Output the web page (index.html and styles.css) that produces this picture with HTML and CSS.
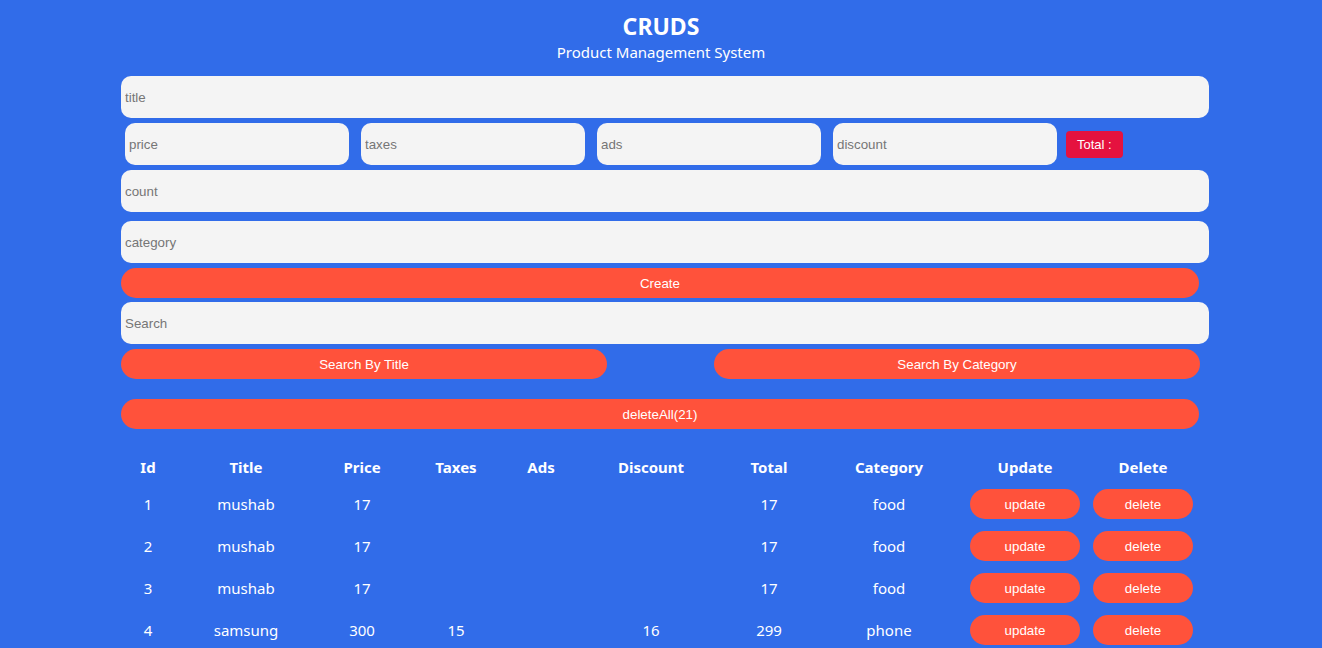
FILE: index.html
```html
<!DOCTYPE html>
<html lang="en">
<head>
<meta charset="UTF-8">
<title>CRUDS</title>
<link rel="stylesheet" href="styles.css">
</head>
<body>
<div class="crud">
  <div class="head">
    <h2 class="head-title">CRUDS</h2>
    <p class="head-sub">Product Management System</p>
  </div>
  <div class="inputs">
    <input class="field" type="text" placeholder="title">
    <div class="price">
      <input class="field small" type="number" placeholder="price">
      <input class="field small" type="number" placeholder="taxes">
      <input class="field small" type="number" placeholder="ads">
      <input class="field small" type="number" placeholder="discount">
      <small class="total">Total :</small>
    </div>
    <input class="field" type="number" placeholder="count">
    <input class="field cat" type="text" placeholder="category">
    <button class="btn create">Create</button>
  </div>
  <div class="search-block">
    <input class="field" type="text" placeholder="Search">
    <div class="btn-search">
      <button class="btn half">Search By Title</button>
      <button class="btn half">Search By Category</button>
    </div>
  </div>
  <div class="delete-all">
    <button class="btn">deleteAll(21)</button>
  </div>
  <div class="outputs">
    <table class="tbl">
      <colgroup>
        <col class="c1"><col class="c2"><col class="c3"><col class="c4"><col class="c5">
        <col class="c6"><col class="c7"><col class="c8"><col class="c9"><col class="c10">
      </colgroup>
      <thead>
        <tr>
          <th>Id</th><th>Title</th><th>Price</th><th>Taxes</th><th>Ads</th>
          <th>Discount</th><th>Total</th><th>Category</th><th>Update</th><th>Delete</th>
        </tr>
      </thead>
      <tbody>
        <tr>
          <td>1</td><td>mushab</td><td>17</td><td></td><td></td><td></td><td>17</td><td>food</td>
          <td><button class="btn upd">update</button></td><td><button class="btn del">delete</button></td>
        </tr>
        <tr>
          <td>2</td><td>mushab</td><td>17</td><td></td><td></td><td></td><td>17</td><td>food</td>
          <td><button class="btn upd">update</button></td><td><button class="btn del">delete</button></td>
        </tr>
        <tr>
          <td>3</td><td>mushab</td><td>17</td><td></td><td></td><td></td><td>17</td><td>food</td>
          <td><button class="btn upd">update</button></td><td><button class="btn del">delete</button></td>
        </tr>
        <tr>
          <td>4</td><td>samsung</td><td>300</td><td>15</td><td></td><td>16</td><td>299</td><td>phone</td>
          <td><button class="btn upd">update</button></td><td><button class="btn del">delete</button></td>
        </tr>
      </tbody>
    </table>
  </div>
</div>
</body>
</html>
```
FILE: styles.css
```css
* {
  box-sizing: border-box;
}
html, body {
  margin: 0;
  padding: 0;
}
body {
  background: #316ce9;
  color: #ffffff;
  font-family: "Noto Sans", "Open Sans", sans-serif;
  overflow: hidden;
}
.crud {
  width: 1080px;
  margin: 0 auto;
}
.head {
  text-align: center;
  padding-top: 11px;
}
.head-title {
  margin: 0;
  font-size: 23px;
  line-height: 30px;
  font-weight: 700;
}
.head-sub {
  margin: 0;
  font-size: 15px;
  line-height: 22px;
}
.inputs {
  margin-top: 13px;
}
.field {
  display: block;
  width: 1088px;
  height: 42px;
  border: none;
  outline: none;
  background: #f4f4f4;
  border-radius: 10px;
  padding: 0 4px;
  margin: 0 0 5px 0;
  font-family: "Liberation Sans", Arial, sans-serif;
  font-size: 13.33px;
  color: #333;
}
.field::placeholder {
  color: #767676;
}
.field.cat {
  margin-top: 9px;
}
.price {
  display: flex;
  align-items: center;
  gap: 12px;
  padding-left: 4px;
  margin-bottom: 5px;
}
.field.small {
  width: 224px;
  margin: 0;
}
.total {
  margin-left: -3px;
  background: #e5123f;
  color: #ffffff;
  font-family: "Liberation Sans", Arial, sans-serif;
  font-size: 13px;
  line-height: 27px;
  height: 27px;
  padding: 0 11px;
  border-radius: 4px;
}
.btn {
  display: block;
  width: 100%;
  height: 30px;
  border: none;
  outline: none;
  border-radius: 15px;
  background: #ff523b;
  color: #ffffff;
  font-family: "Liberation Sans", Arial, sans-serif;
  font-size: 13.33px;
  cursor: pointer;
}
.create {
  width: 1078px;
  margin-bottom: 4px;
}
.btn-search {
  display: flex;
  justify-content: space-between;
  width: 1079px;
}
.btn.half {
  width: 486px;
}
.delete-all {
  margin-top: 20px;
  width: 1078px;
}
.outputs {
  margin-top: 22px;
}
.tbl {
  width: 1080px;
  table-layout: fixed;
  border-collapse: collapse;
  text-align: center;
}
.c1 { width: 54px; }
.c2 { width: 142px; }
.c3 { width: 90px; }
.c4 { width: 98px; }
.c5 { width: 72px; }
.c6 { width: 148px; }
.c7 { width: 88px; }
.c8 { width: 152px; }
.c9 { width: 120px; }
.c10 { width: 116px; }
.tbl th {
  font-size: 15px;
  font-weight: 700;
  height: 32px;
  padding: 0;
}
.tbl td {
  font-size: 15px;
  height: 42px;
  padding: 0;
}
.btn.upd {
  width: 110px;
  margin-left: 5px;
}
.btn.del {
  width: 100px;
  margin-left: 8px;
}
```
